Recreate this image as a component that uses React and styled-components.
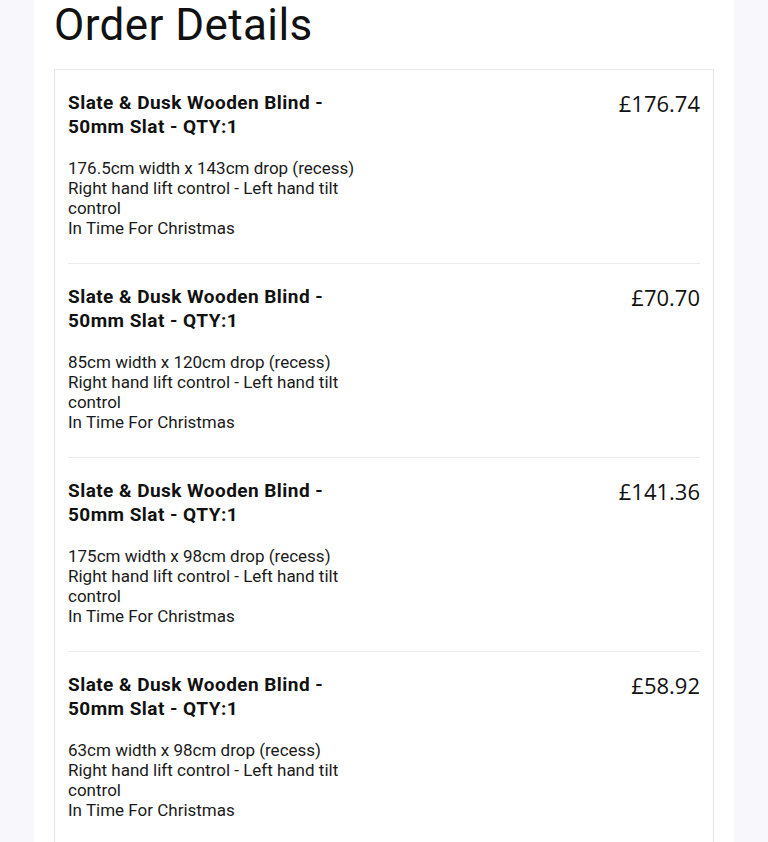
import React from 'react'
import styled, { createGlobalStyle } from 'styled-components'

const GlobalStyle = createGlobalStyle`
  html, body {
    margin: 0;
    padding: 0;
    background: #f7f7fc;
    font-family: Roboto, "Liberation Sans", sans-serif;
    color: #111;
  }
`

const Page = styled.div`
  width: 700px;
  min-height: 842px;
  margin-left: 34px;
  padding: 0 20px;
  box-sizing: border-box;
  background: #ffffff;
`

const Title = styled.h1`
  margin: 0 0 19px;
  font-size: 44px;
  font-weight: 400;
  line-height: 50px;
  letter-spacing: 0.4px;
  color: #111;
`

const Card = styled.div`
  border: 1px solid #e4e4e4;
  border-bottom: none;
  padding: 0 13px;
`

const Item = styled.div`
  display: flex;
  justify-content: space-between;
  align-items: flex-start;
  padding: 21px 0 25px;
  border-bottom: 1px solid ${p => (p.$last ? 'transparent' : '#ececec')};
`

const Info = styled.div`
  max-width: 300px;
`

const Name = styled.div`
  font-size: 19px;
  font-weight: 700;
  line-height: 24px;
  letter-spacing: 0.45px;
  margin-bottom: 19px;
`

const Desc = styled.div`
  font-size: 17px;
  line-height: 20px;
  color: #1a1a1a;
`

const Price = styled.div`
  font-family: "Open Sans", Roboto, sans-serif;
  font-size: 22px;
  line-height: 24px;
  color: #111;
`

const items = [
  { size: '176.5cm width x 143cm drop (recess)', price: '£176.74' },
  { size: '85cm width x 120cm drop (recess)', price: '£70.70' },
  { size: '175cm width x 98cm drop (recess)', price: '£141.36' },
  { size: '63cm width x 98cm drop (recess)', price: '£58.92' },
]

export default function App() {
  return (
    <>
      <GlobalStyle />
      <Page>
        <Title>Order Details</Title>
        <Card>
          {items.map((it, i) => (
            <Item key={i} $last={i === items.length - 1}>
              <Info>
                <Name>Slate &amp; Dusk Wooden Blind - 50mm Slat - QTY:1</Name>
                <Desc>
                  <div>{it.size}</div>
                  <div>Right hand lift control - Left hand tilt control</div>
                  <div>In Time For Christmas</div>
                </Desc>
              </Info>
              <Price>{it.price}</Price>
            </Item>
          ))}
        </Card>
      </Page>
    </>
  )
}
